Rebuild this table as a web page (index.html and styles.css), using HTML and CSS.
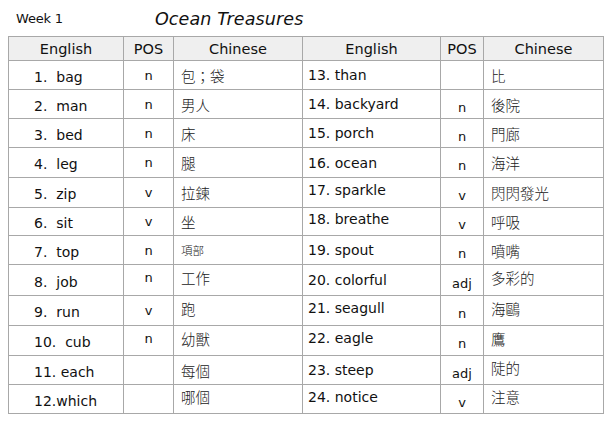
FILE: index.html
```html
<!DOCTYPE html>
<html>
<head>
<meta charset="utf-8">
<link rel="stylesheet" href="styles.css">
</head>
<body>
<div class="page">
  <div class="title-bar">
    <span class="week">Week 1</span>
    <span class="title">Ocean Treasures</span>
  </div>
  <table class="vocab">
    <colgroup>
      <col class="c-en1"><col class="c-pos1"><col class="c-zh1">
      <col class="c-en2"><col class="c-pos2"><col class="c-zh2">
    </colgroup>
    <thead>
      <tr class="head">
        <th>English</th><th>POS</th><th>Chinese</th>
        <th>English</th><th>POS</th><th>Chinese</th>
      </tr>
    </thead>
    <tbody>
      <tr class="h29"><td class="en1">1.&nbsp; bag</td><td class="pos1">n</td><td class="zh">包；袋</td><td class="en2">13. than</td><td class="pos2"></td><td class="zh">比</td></tr>
      <tr class="h29"><td class="en1">2.&nbsp; man</td><td class="pos1">n</td><td class="zh">男人</td><td class="en2">14. backyard</td><td class="pos2">n</td><td class="zh">後院</td></tr>
      <tr class="h29"><td class="en1">3.&nbsp; bed</td><td class="pos1">n</td><td class="zh">床</td><td class="en2">15. porch</td><td class="pos2">n</td><td class="zh">門廊</td></tr>
      <tr class="h30"><td class="en1">4.&nbsp; leg</td><td class="pos1">n</td><td class="zh">腿</td><td class="en2">16. ocean</td><td class="pos2">n</td><td class="zh">海洋</td></tr>
      <tr class="h30"><td class="en1">5.&nbsp; zip</td><td class="pos1">v</td><td class="zh">拉鍊</td><td class="en2 up">17. sparkle</td><td class="pos2">v</td><td class="zh">閃閃發光</td></tr>
      <tr class="h28"><td class="en1">6.&nbsp; sit</td><td class="pos1">v</td><td class="zh">坐</td><td class="en2 up">18. breathe</td><td class="pos2">v</td><td class="zh">呼吸</td></tr>
      <tr class="h29"><td class="en1">7.&nbsp; top</td><td class="pos1">n</td><td class="zh small">項部</td><td class="en2">19. spout</td><td class="pos2">n</td><td class="zh">噴嘴</td></tr>
      <tr class="h31"><td class="en1">8.&nbsp; job</td><td class="pos1 up">n</td><td class="zh up">工作</td><td class="en2">20. colorful</td><td class="pos2">adj</td><td class="zh up">多彩的</td></tr>
      <tr class="h30"><td class="en1">9.&nbsp; run</td><td class="pos1">v</td><td class="zh up">跑</td><td class="en2 up">21. seagull</td><td class="pos2">n</td><td class="zh up">海鷗</td></tr>
      <tr class="h30"><td class="en1">10.&nbsp; cub</td><td class="pos1 up">n</td><td class="zh up">幼獸</td><td class="en2 up">22. eagle</td><td class="pos2">n</td><td class="zh up">鷹</td></tr>
      <tr class="h29"><td class="en1">11. each</td><td class="pos1"></td><td class="zh">每個</td><td class="en2">23. steep</td><td class="pos2">adj</td><td class="zh up">陡的</td></tr>
      <tr class="h29"><td class="en1">12.which</td><td class="pos1"></td><td class="zh up">哪個</td><td class="en2 up">24. notice</td><td class="pos2">v</td><td class="zh up">注意</td></tr>
    </tbody>
  </table>
</div>
</body>
</html>
```
FILE: styles.css
```css
html, body {
  margin: 0;
  padding: 0;
  background: #ffffff;
}
body {
  font-family: "DejaVu Sans", "Noto Sans CJK TC", sans-serif;
  color: #111111;
}
.page {
  padding: 0 8px 0 8px;
}
.title-bar {
  height: 36px;
  display: flex;
  align-items: flex-start;
  padding-top: 9px;
  box-sizing: border-box;
}
.week {
  font-size: 13px;
  margin-left: 8px;
  margin-top: 2px;
  width: 139px;
  letter-spacing: -0.2px;
}
.title {
  font-size: 17.5px;
  font-style: italic;
  letter-spacing: 0.1px;
}
.vocab {
  border-collapse: collapse;
  table-layout: fixed;
  width: 595px;
  font-size: 14px;
}
.c-en1 { width: 115px; }
.c-pos1 { width: 50px; }
.c-zh1 { width: 129px; }
.c-en2 { width: 138px; }
.c-pos2 { width: 43px; }
.c-zh2 { width: 120px; }
.vocab th, .vocab td {
  border: 1px solid #a8a8a8;
  padding: 0;
  white-space: nowrap;
  overflow: hidden;
}
.head {
  height: 24px;
  background: #efefef;
}
.vocab th {
  font-weight: normal;
  text-align: center;
  font-size: 14.5px;
  padding-top: 1px;
}
.h28 { height: 28px; }
.h29 { height: 29px; }
.h30 { height: 30px; }
.h31 { height: 31px; }
.en1 {
  padding-left: 25px !important;
  padding-top: 3px !important;
}
.en2 {
  padding-left: 5px !important;
}
.pos1 {
  text-align: center;
  font-size: 13px;
}
.pos2 {
  text-align: center;
  font-size: 13px;
  padding-top: 6px !important;
}
.zh {
  font-family: "Noto Sans CJK TC", sans-serif;
  font-weight: 300;
  padding-left: 7px !important;
  font-size: 14.5px;
  color: #222;
}
.zh.small {
  font-size: 11.5px;
}
.up {
  padding-bottom: 5px !important;
}
```
